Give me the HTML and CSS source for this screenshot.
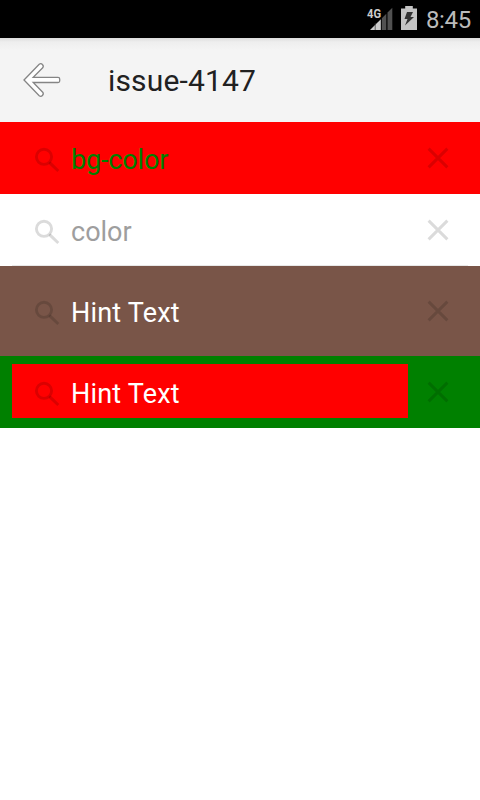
FILE: index.html
```
<!DOCTYPE html>
<html lang="en">
<head>
<meta charset="utf-8">
<title>issue-4147</title>
<link rel="stylesheet" href="styles.css">
</head>
<body>
<svg class="defs" width="0" height="0" aria-hidden="true">
  <symbol id="search" viewBox="0 0 26 26"><circle cx="10" cy="9.8" r="7.6" fill="none" stroke="currentColor" stroke-width="2.9"/><path d="M15 15.6L16.7 14.5L25.3 23L23.3 25L14.7 17Z" fill="currentColor"/></symbol>
  <symbol id="close" viewBox="0 0 22 22"><path d="M1.6 1.6L20.4 20.4M20.4 1.6L1.6 20.4" fill="none" stroke="currentColor" stroke-width="3"/></symbol>
</svg>
<header class="status">
  <svg class="signal" width="28" height="26" viewBox="0 0 28 26">
    <path d="M4 24L14.8 13.2V24Z" fill="#ccc"/>
    <path d="M15.8 12.2L20.3 7.7V24H15.8ZM21.5 6.5L26.3 1.7V24H21.5Z" fill="#515151"/>
    <path d="M9.2 17V24" stroke="#333" stroke-width=".7"/>
    <text x="1" y="11.5" class="net" textLength="14" lengthAdjust="spacingAndGlyphs">4G</text>
  </svg>
  <svg class="battery" width="16" height="24" viewBox="0 0 16 24">
    <path d="M4.2 0H11.8V2.5H16V24H0V2.5H4.2Z" fill="#c4c4c4"/>
    <path d="M6 6H12L9.5 11H13L4 19.5L6.5 13H3.5Z" fill="#333"/>
  </svg>
  <span class="time">8:45</span>
</header>
<nav class="bar">
  <svg class="back" width="40" height="38" viewBox="0 0 40 38"><path d="M2 19L17.2 3.2Q19 1.9 20.4 3.5Q22 5 20.7 6.8L11.2 16.3H36Q37.7 16.3 37.7 18V20Q37.7 21.5 36 21.5H11.2L20.7 31.2Q22 33 20.4 34.5Q19 36.1 17.2 34.8Z" fill="#fff" stroke="#858585" stroke-width="1.3"/></svg>
  <h1 class="title">issue-4147</h1>
</nav>
<main>
  <div class="row red"><div class="field"><svg class="icon"><use href="#search"/></svg><span class="hint">bg-color</span></div><svg class="clear"><use href="#close"/></svg></div>
  <div class="row plain"><div class="field"><svg class="icon"><use href="#search"/></svg><span class="hint">color</span></div><svg class="clear"><use href="#close"/></svg></div>
  <div class="row brown"><div class="field"><svg class="icon"><use href="#search"/></svg><span class="hint">Hint Text</span></div><svg class="clear"><use href="#close"/></svg></div>
  <div class="row green"><div class="field"><svg class="icon"><use href="#search"/></svg><span class="hint">Hint Text</span></div><svg class="clear"><use href="#close"/></svg></div>
</main>
</body>
</html>
```
FILE: styles.css
```
* { box-sizing: border-box; }
body { margin: 0; min-height: 800px; background: #fff; font-family: Roboto, sans-serif; }
.defs { position: absolute; }
svg { display: block; flex: none; }
.status { display: flex; height: 38px; padding: 6px 9px 0 0; justify-content: flex-end; background: #000; color: #bbb; }
.signal { margin-right: 7px; }
.net { font: bold 13.5px Roboto, sans-serif; fill: #ccc; stroke: #000; stroke-width: 1.5px; paint-order: stroke; }
.battery { margin-right: 9px; }
.time { font-size: 24px; line-height: 28px; letter-spacing: -.3px; }
.bar { display: flex; align-items: center; height: 84px; padding-left: 22px; background: linear-gradient(#dcdcdc, #eee 4px, #f4f4f4 12px); }
.title { margin: 2px 0 0 46px; font-size: 30px; font-weight: 400; line-height: 36px; letter-spacing: .15px; color: #212121; }
.row { display: flex; align-items: center; height: 72px; padding-left: 12px; }
.field { display: flex; align-items: center; width: 396px; height: 54px; margin-bottom: 3px; padding-left: 22px; }
.icon { width: 26px; height: 26px; margin: 7px 11px 0 0; color: rgba(0, 0, 0, .14); }
.clear { width: 22px; height: 22px; margin-left: 19px; color: rgba(0, 0, 0, .14); }
.hint { margin-top: 7px; font-size: 27px; line-height: 32px; color: #fff; }
.red .hint { color: #008000; letter-spacing: -.15px; }
.brown .hint, .green .hint { letter-spacing: .2px; }
.red { background: #f00; }
.plain { background: linear-gradient(#e8e8e8, #e8e8e8) 12px 100% / 456px 1px no-repeat; }
.plain .hint { color: #9e9e9e; }
.brown { height: 90px; background: #795548; }
.green { background: #008000; }
.green .field { background: #f00; }
```
